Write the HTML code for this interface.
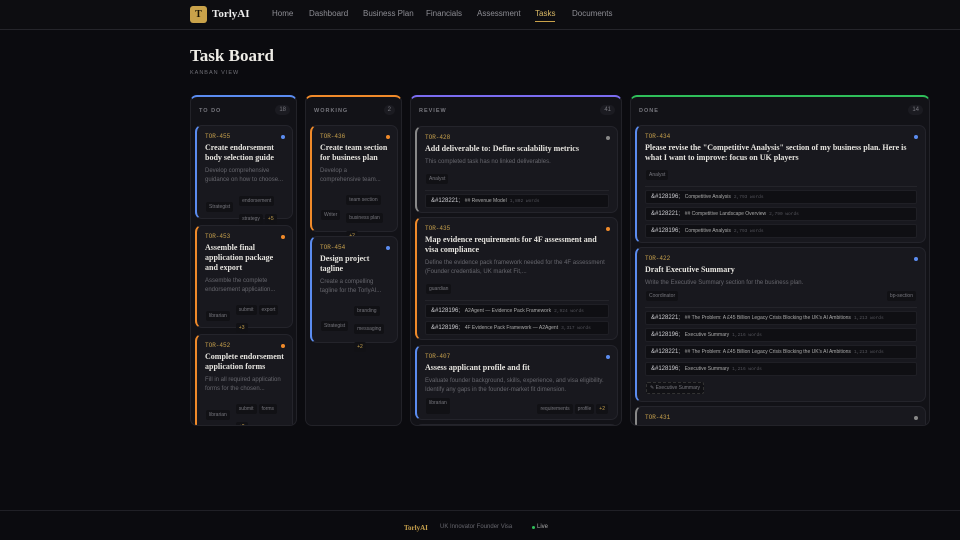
<!DOCTYPE html>
<html><head><meta charset="utf-8"><style>
*{box-sizing:border-box;margin:0;padding:0}
body{width:960px;height:540px;overflow:hidden;background:#0b0b0f;font-family:"Liberation Sans",sans-serif;color:#ddd;position:relative}
.a{position:absolute}
.nav{left:0;top:0;width:960px;height:30px;border-bottom:1px solid #25252b;background:#0d0d11}
.logo{left:190px;top:6px;width:17px;height:17px;background:#c9a24a;border-radius:3px;color:#1a1405;font:bold 10px "Liberation Serif",serif;text-align:center;line-height:17px}
.brand{left:212px;top:8px;font:bold 11px "Liberation Serif",serif;color:#eee}
.nl{top:9px;font-size:8px;color:#8d8d94}
.col{background:#121217;border:1px solid #222228;border-radius:7px;overflow:hidden;height:331px;top:95px}
.ch{position:absolute;top:11px;left:8px;font-size:5.5px;letter-spacing:1px;color:#77777e;font-weight:bold}
.cnt{position:absolute;top:8px;right:6px;font-size:6px;color:#77777e;background:#1b1b21;border-radius:7px;padding:2px 4px}
.card{position:absolute;background:#18181e;border:1px solid #24242b;border-left:2px solid #5b8cf0;border-radius:7px;padding:7px 8px}
.id{font:6px "Liberation Mono",monospace;color:#c6a04c}
.dot{position:absolute;right:7px;top:9px;width:4px;height:4px;border-radius:50%}
.t{font:bold 8px/10px "Liberation Serif",serif;color:#e6e4df;margin-top:3px}
.d{font-size:6px;line-height:9px;color:#66666d;margin-top:4px}
.tg{display:inline-block;font-size:5px;color:#76767d;background:#111115;border-radius:2px;padding:2px 3px;margin:1px 1px}
.dl{font-size:6px;color:#cfcfd4;background:#0f0f13;border:1px solid #1f1f25;border-radius:2px;padding:3px 5px;margin-top:3px;white-space:nowrap;overflow:hidden}
.dl i{font-style:normal;font-size:5px;color:#aaa;margin-left:3px}
.dl b{font:4.5px "Liberation Mono",monospace;color:#55555c;margin-left:3px;font-weight:normal}
.sep{border-top:1px solid #24242a;margin-top:5px}
</style></head><body>
<div class="a nav"></div>
<div class="a logo">T</div><div class="a brand">TorlyAI</div>
<div class="a nl" style="left:272px">Home</div>
<div class="a nl" style="left:309px">Dashboard</div>
<div class="a nl" style="left:363px">Business Plan</div>
<div class="a nl" style="left:426px">Financials</div>
<div class="a nl" style="left:477px">Assessment</div>
<div class="a nl" style="left:535px;color:#d9b865">Tasks</div>
<div class="a" style="left:535px;top:21px;width:20px;height:1px;background:#c9a24a"></div>
<div class="a nl" style="left:572px">Documents</div>
<div class="a" style="left:190px;top:46px;font:bold 17px 'Liberation Serif',serif;color:#eeece6">Task Board</div>
<div class="a" style="left:190px;top:70px;font-size:5.5px;letter-spacing:1px;color:#6f6f76">KANBAN VIEW</div>

<div class="a col" style="left:190px;width:107px;border-top:2px solid #5b8cf0">
<div class="ch">TO DO</div><div class="cnt">18</div>
<div class="card" style="left:4px;top:28px;width:98px;height:94px"><div class="id">TOR-455</div><div class="dot" style="background:#5b8cf0"></div><div class="t">Create endorsement body selection guide</div><div class="d">Develop comprehensive guidance on how to choose...</div><div style="display:flex;align-items:center;margin-top:4px"><span class="tg">Strategist</span><div style="margin-left:4px;width:50px"><span class="tg">endorsement</span><span class="tg">strategy</span><span class="tg" style="color:#c6a04c">+5</span></div></div></div>
<div class="card" style="left:4px;top:128px;width:98px;height:103px;border-left-color:#f08a2a"><div class="id">TOR-453</div><div class="dot" style="background:#f08a2a"></div><div class="t">Assemble final application package and export</div><div class="d">Assemble the complete endorsement application...</div><div style="display:flex;align-items:center;margin-top:3px"><span class="tg">librarian</span><div style="margin-left:4px;width:50px"><span class="tg">submit</span><span class="tg">export</span><span class="tg" style="color:#c6a04c">+3</span></div></div></div>
<div class="card" style="left:4px;top:237px;width:98px;height:100px;border-left-color:#f08a2a"><div class="id">TOR-452</div><div class="dot" style="background:#f08a2a"></div><div class="t">Complete endorsement application forms</div><div class="d">Fill in all required application forms for the chosen...</div><div style="display:flex;align-items:center;margin-top:3px"><span class="tg">librarian</span><div style="margin-left:4px;width:50px"><span class="tg">submit</span><span class="tg">forms</span><span class="tg" style="color:#c6a04c">+2</span></div></div></div>
</div>

<div class="a col" style="left:305px;width:97px;border-top:2px solid #f08a2a">
<div class="ch">WORKING</div><div class="cnt">2</div>
<div class="card" style="left:4px;top:28px;width:88px;height:107px;border-left-color:#f08a2a"><div class="id">TOR-436</div><div class="dot" style="background:#f08a2a"></div><div class="t">Create team section for business plan</div><div class="d">Develop a comprehensive team...</div><div style="display:flex;align-items:center;margin-top:3px"><span class="tg">Writer</span><div style="margin-left:4px;width:44px"><span class="tg">team section</span><span class="tg">business plan</span><span class="tg" style="color:#c6a04c">+2</span></div></div></div>
<div class="card" style="left:4px;top:139px;width:88px;height:107px"><div class="id">TOR-454</div><div class="dot" style="background:#5b8cf0"></div><div class="t">Design project tagline</div><div class="d">Create a compelling tagline for the TorlyAI...</div><div style="display:flex;align-items:center;margin-top:3px"><span class="tg">Strategist</span><div style="margin-left:4px;width:44px"><span class="tg">branding</span><span class="tg">messaging</span><span class="tg" style="color:#c6a04c">+2</span></div></div></div>
</div>

<div class="a col" style="left:410px;width:212px;border-top:2px solid #7b6cf0">
<div class="ch">REVIEW</div><div class="cnt">41</div>
<div class="card" style="left:4px;top:29px;width:203px;height:87px;border-left-color:#888"><div class="id">TOR-428</div><div class="dot" style="background:#888"></div><div class="t">Add deliverable to: Define scalability metrics</div><div class="d">This completed task has no linked deliverables.</div><span class="tg" style="margin-top:4px">Analyst</span><div class="sep"></div><div class="dl">&amp;#128221; <i>## Revenue Model</i><b>1,802 words</b></div></div>
<div class="card" style="left:4px;top:120px;width:203px;height:123px;border-left-color:#f08a2a"><div class="id">TOR-435</div><div class="dot" style="background:#f08a2a"></div><div class="t">Map evidence requirements for 4F assessment and visa compliance</div><div class="d">Define the evidence pack framework needed for the 4F assessment (Founder credentials, UK market Fit,...</div><span class="tg" style="margin-top:3px">guardian</span><div class="sep"></div><div class="dl">&amp;#128196; <i>A2Agent — Evidence Pack Framework</i><b>2,924 words</b></div><div class="dl">&amp;#128196; <i>4F Evidence Pack Framework — A2Agent</i><b>3,317 words</b></div></div>
<div class="card" style="left:4px;top:248px;width:203px;height:75px"><div class="id">TOR-407</div><div class="dot" style="background:#5b8cf0"></div><div class="t">Assess applicant profile and fit</div><div class="d">Evaluate founder background, skills, experience, and visa eligibility. Identify any gaps in the founder-market fit dimension.</div><div style="display:flex;justify-content:space-between;margin-top:2px"><span class="tg">librarian</span><span><span class="tg">requirements</span><span class="tg">profile</span><span class="tg" style="color:#c6a04c">+2</span></span></div></div>
<div class="card" style="left:4px;top:327px;width:203px;height:60px"></div>
</div>

<div class="a col" style="left:630px;width:300px;border-top:2px solid #2fbf5a">
<div class="ch">DONE</div><div class="cnt">14</div>
<div class="card" style="left:4px;top:28px;width:291px;height:118px"><div class="id">TOR-434</div><div class="dot" style="background:#5b8cf0"></div><div class="t">Please revise the "Competitive Analysis" section of my business plan. Here is what I want to improve: focus on UK players</div><span class="tg" style="margin-top:3px">Analyst</span><div class="sep"></div><div class="dl">&amp;#128196; <i>Competitive Analysis</i><b>2,793 words</b></div><div class="dl">&amp;#128221; <i>## Competitive Landscape Overview</i><b>2,790 words</b></div><div class="dl">&amp;#128196; <i>Competitive Analysis</i><b>2,793 words</b></div></div>
<div class="card" style="left:4px;top:150px;width:291px;height:155px"><div class="id">TOR-422</div><div class="dot" style="background:#5b8cf0"></div><div class="t">Draft Executive Summary</div><div class="d">Write the Executive Summary section for the business plan.</div><div style="display:flex;justify-content:space-between;margin-top:2px"><span class="tg">Coordinator</span><span class="tg">bp-section</span></div><div class="sep"></div><div class="dl">&amp;#128221; <i>## The Problem: A £45 Billion Legacy Crisis Blocking the UK's AI Ambitions</i><b>1,213 words</b></div><div class="dl">&amp;#128196; <i>Executive Summary</i><b>1,216 words</b></div><div class="dl">&amp;#128221; <i>## The Problem: A £45 Billion Legacy Crisis Blocking the UK's AI Ambitions</i><b>1,213 words</b></div><div class="dl">&amp;#128196; <i>Executive Summary</i><b>1,216 words</b></div><span class="tg" style="margin-top:4px;border:1px dashed #333">✎ Executive Summary</span></div>
<div class="card" style="left:4px;top:309px;width:291px;height:60px;border-left-color:#888"><div class="id">TOR-431</div><div class="dot" style="background:#888"></div></div>
</div>

<div class="a" style="left:0;top:510px;width:960px;height:1px;background:#202026"></div>
<div class="a" style="left:404px;top:524px;font:bold 7px 'Liberation Serif',serif;color:#c6a04c">TorlyAI</div>
<div class="a" style="left:440px;top:524px;font-size:6px;color:#66666d">UK Innovator Founder Visa</div>
<div class="a" style="left:532px;top:526px;width:3px;height:3px;border-radius:50%;background:#2fbf5a"></div>
<div class="a" style="left:537px;top:524px;font-size:6px;color:#aaa">Live</div>
</body></html>
